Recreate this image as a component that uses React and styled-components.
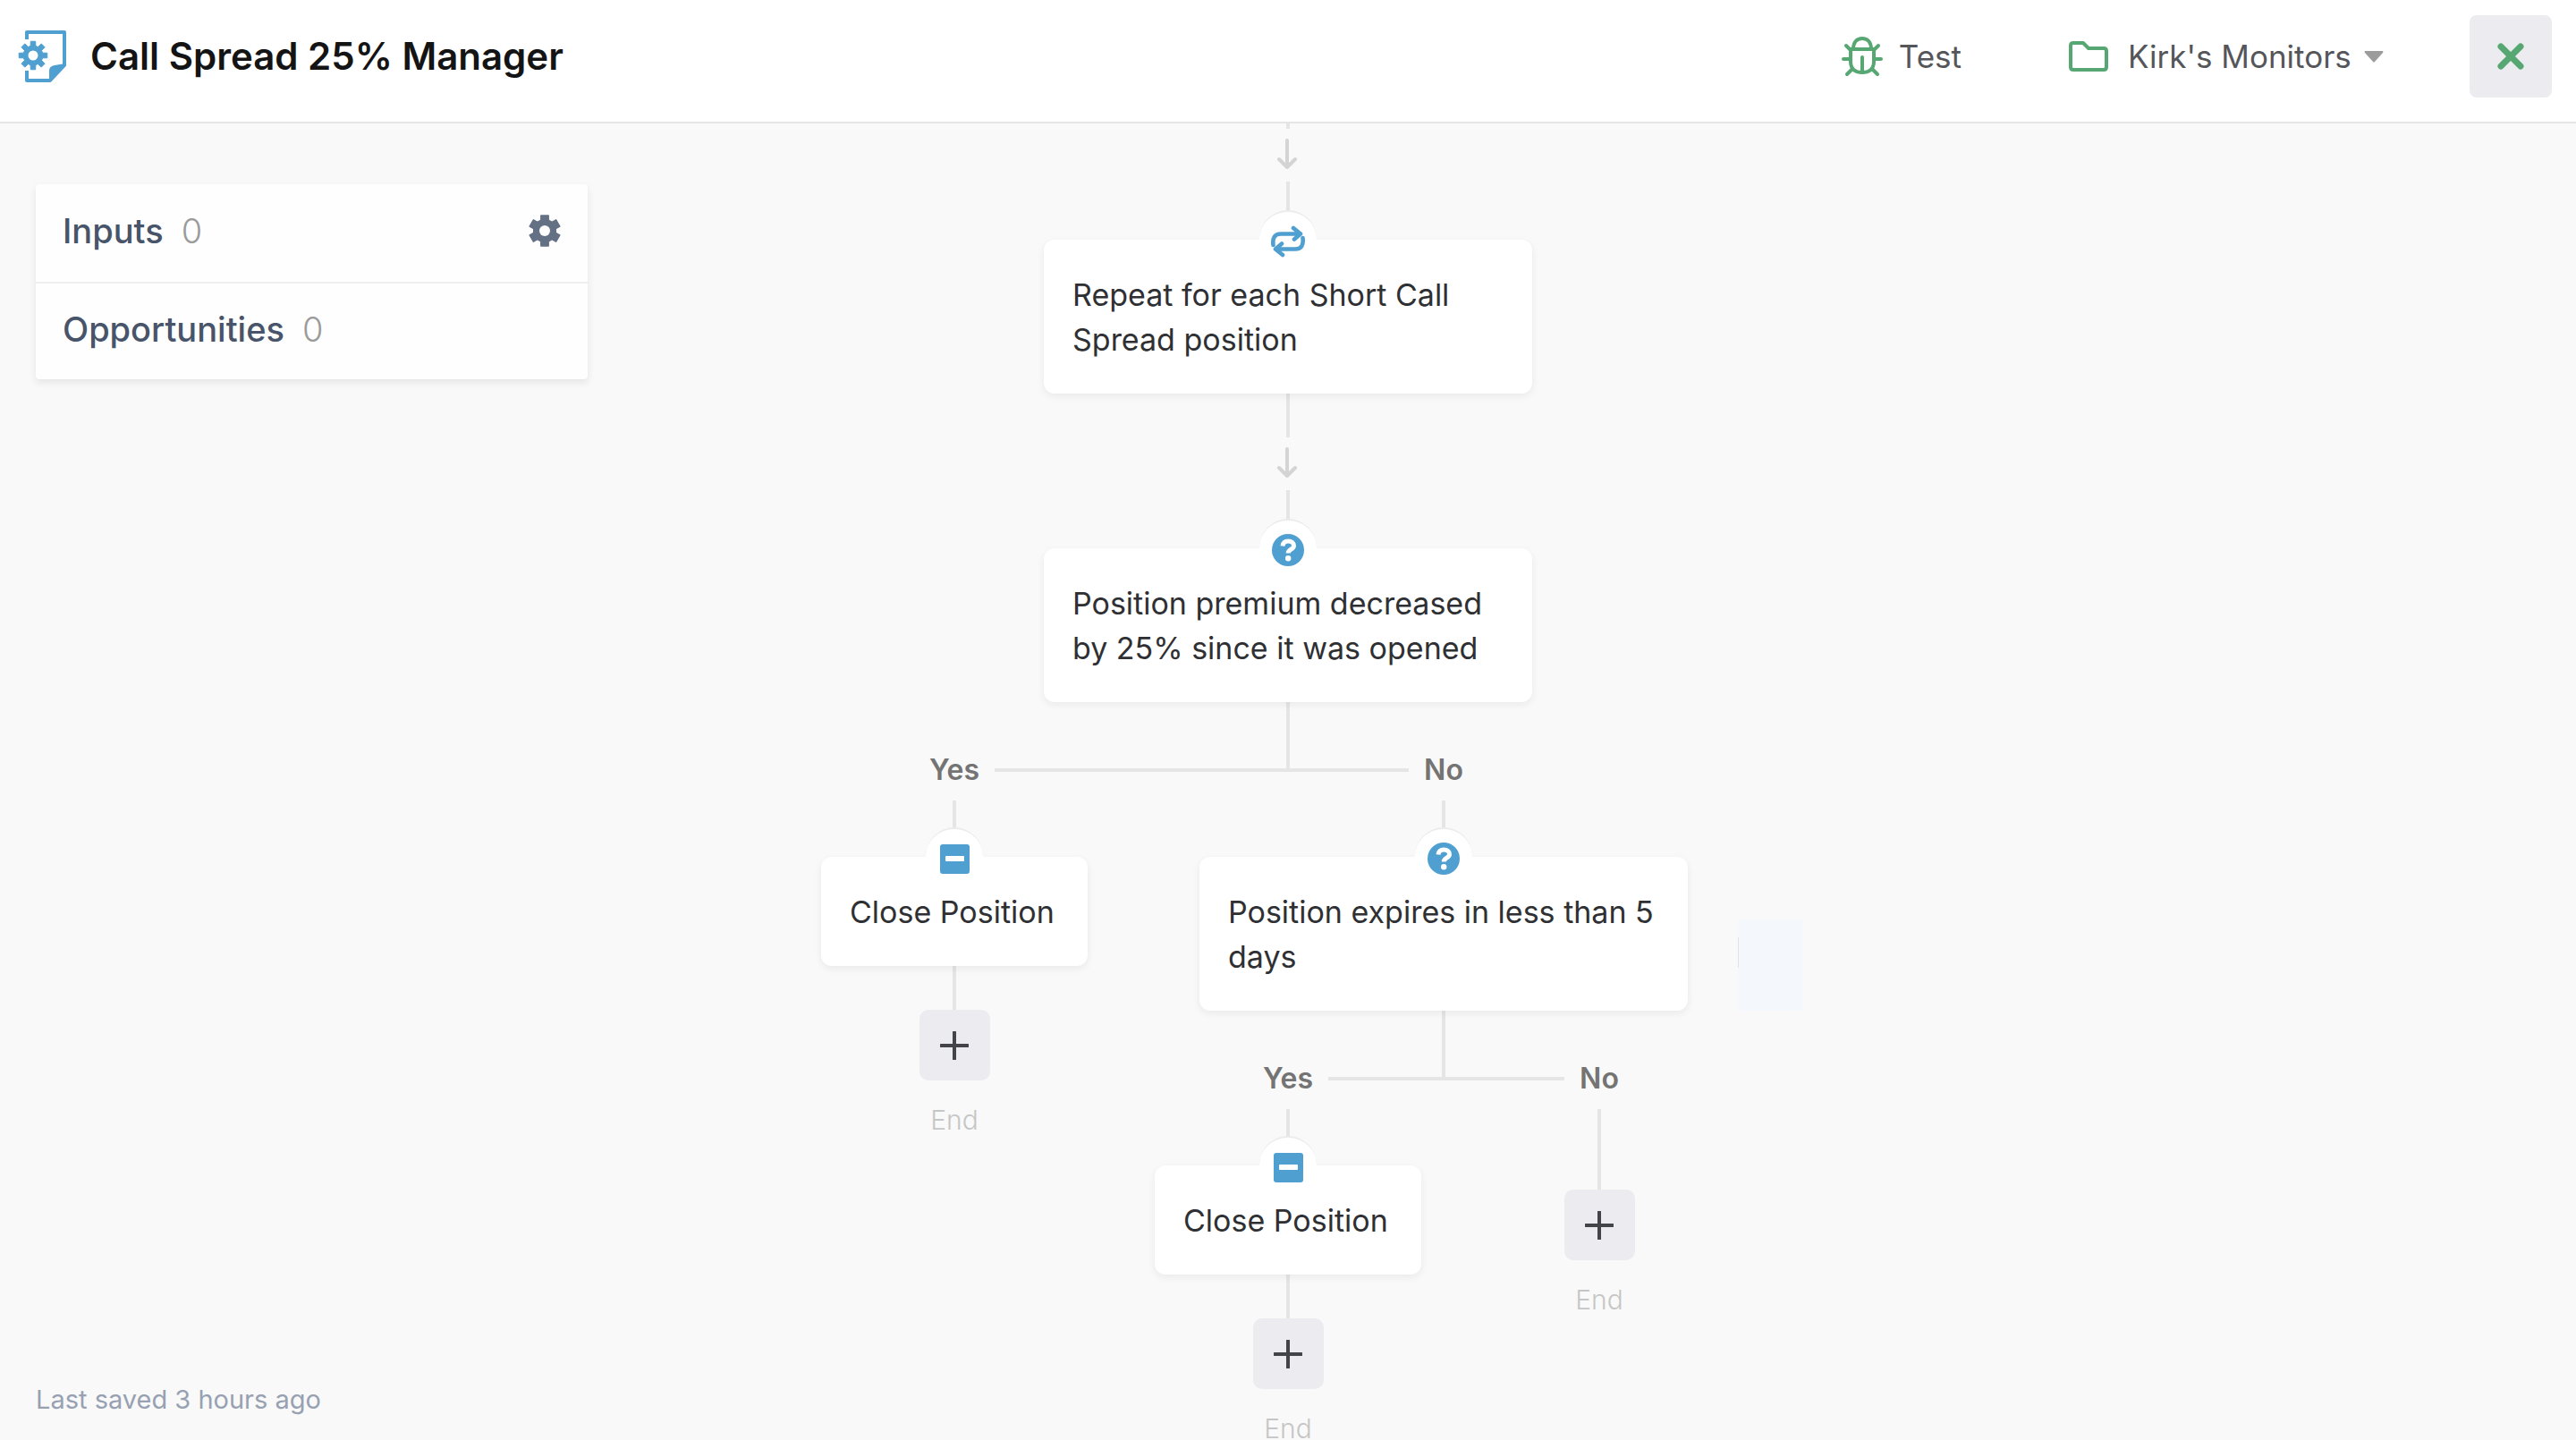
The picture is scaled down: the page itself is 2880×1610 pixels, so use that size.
import React from "react";
import styled, { createGlobalStyle } from "styled-components";

const GlobalStyle = createGlobalStyle`
  *, *::before, *::after { box-sizing: border-box; }
  body {
    margin: 0;
    background: #f9f9f9;
    color: #2f3033;
    font-family: Inter, "Liberation Sans", sans-serif;
    -webkit-font-smoothing: antialiased;
  }
  h1, h2, p { margin: 0; font: inherit; }
  button, select {
    border: 0;
    padding: 0;
    background: none;
    color: inherit;
    font: inherit;
    cursor: pointer;
  }
`;

const palette = {
  blue: "#4f9fd1",
  green: "#57a773",
  line: "#e5e5e5",
  button: "#ebebf0",
};

const Page = styled.div`
  display: grid;
  grid-template-rows: auto minmax(0, 1fr);
  height: 100vh;
`;

const Header = styled.header`
  display: flex;
  align-items: center;
  height: 138px;
  padding: 0 27px 10px 20px;
  background: #fff;
  border-bottom: 2px solid ${palette.line};
`;

const Title = styled.h1`
  flex: 1;
  margin-left: 26px;
  color: #141414;
  font-size: 42px;
  font-weight: 600;
  line-height: 48px;
`;

const ToolButton = styled.button`
  display: flex;
  align-items: center;
  gap: 18px;
  margin-right: 120px;
  color: #55565a;
  font-size: 35px;
  line-height: 44px;
`;

const FolderPicker = styled.label`
  display: flex;
  align-items: center;
  gap: 22px;
  margin-right: 96px;
  color: #55565a;
`;

const FolderSelect = styled.select`
  appearance: none;
  margin-right: -8px;
  font-size: 35px;
  line-height: 44px;
`;

const CloseButton = styled.button`
  display: grid;
  place-items: center;
  width: 92px;
  height: 92px;
  border-radius: 8px;
  background: ${palette.button};
`;

const Canvas = styled.main`
  display: grid;
  grid-template-columns: minmax(0, 1fr) auto minmax(0, 1fr);
  grid-template-rows: 100%;
  overflow: hidden;
  position: relative;
`;

const Sidebar = styled.aside`
  display: flex;
  flex-direction: column;
  justify-content: space-between;
  align-items: flex-start;
  padding: 68px 40px 25px;
`;

const Panel = styled.section`
  width: 617px;
  background: #fefefe;
  border-radius: 4px;
  box-shadow: 0 4px 8px rgba(30, 30, 60, 0.09);
`;

const PanelRow = styled.div`
  display: flex;
  align-items: center;
  gap: 20px;
  height: 109px;
  padding: 0 30px 6px;
  font-size: 38px;
  line-height: 44px;

  & + & { border-top: 2px solid #efefef; }
`;

const PanelName = styled.h2`
  color: #475469;
  font-weight: 500;
`;

const PanelCount = styled.span`
  flex: 1;
  color: #9b9b9b;
  font-weight: 300;
`;

const IconButton = styled.button`
  display: grid;
`;

const SavedNote = styled.p`
  color: #97a1b2;
  font-size: 29px;
  line-height: 40px;
`;

const Flow = styled.div`
  display: flex;
  flex-direction: column;
  align-items: center;
`;

const Line = styled.div`
  flex: none;
  width: 4px;
  height: ${(p) => p.$length}px;
  background: ${palette.line};
`;

const ArrowGap = styled.div`
  display: flex;
  padding: 11px 0 14px;
`;

const Card = styled.section`
  position: relative;
  flex: none;
  width: ${(p) => (p.$wide ? 546 : 298)}px;
  padding: 37px 32px 35px;
  border-radius: 12px;
  background: #fff;
  box-shadow: 0 3px 8px rgba(30, 30, 50, 0.07);
  font-size: 34px;
  line-height: 50px;
  white-space: ${(p) => (p.$wide ? "normal" : "nowrap")};
`;

const Badge = styled.span`
  position: absolute;
  top: -33px;
  left: calc(50% - 32px);
  display: grid;
  place-items: center;
  width: 64px;
  height: 68px;
  border-top: 2px solid #ececec;
  border-radius: 32px 32px 0 0;
  background: #fff;
`;

const Stub = styled(Line)`
  margin-bottom: -24px;
`;

const Branches = styled.div`
  display: flex;
  align-items: flex-start;
`;

const Branch = styled.div`
  display: flex;
  flex-direction: column;
  align-items: center;
  min-width: 348px;
`;

const BranchHead = styled.div`
  display: grid;
  grid-template-columns: minmax(0, 1fr) auto minmax(0, 1fr);
  align-items: center;
  gap: 17px;
  align-self: stretch;
  height: 48px;
  margin-bottom: 10px;
`;

const BranchBar = styled.div`
  grid-column: ${(p) => (p.$side === "right" ? 3 : 1)};
  grid-row: 1;
  height: 4px;
  background: ${palette.line};
`;

const BranchLabel = styled.span`
  grid-column: 2;
  grid-row: 1;
  color: #747474;
  font-size: 32px;
  font-weight: 600;
  line-height: 48px;
`;

const BranchBody = styled.div`
  display: flex;
  flex-direction: column;
  align-items: center;
  padding: 0 25px;
`;

const AddButton = styled.button`
  display: grid;
  place-items: center;
  width: 79px;
  height: 79px;
  border-radius: 10px;
  background: ${palette.button};
`;

const EndLabel = styled.span`
  margin-top: 32px;
  color: #c6c6c6;
  font-size: 30px;
  font-weight: 300;
  line-height: 24px;
`;

const DropGhost = styled.div`
  position: absolute;
  top: 890px;
  left: calc(50% + 503px);
  width: 72px;
  height: 102px;
  padding-top: 20px;
  background: #f4f8fc;

  &::before {
    content: "";
    display: block;
    width: 1px;
    height: 34px;
    background: #dfe2e6;
  }
`;

const gearPath = (teeth, outer, inner, tipHalf, rootHalf) => {
  const points = [];
  for (let i = 0; i < teeth; i += 1) {
    const mid = (i * 2 * Math.PI) / teeth - Math.PI / 2;
    [[-rootHalf, inner], [-tipHalf, outer], [tipHalf, outer], [rootHalf, inner]].forEach(([a, r]) => {
      points.push(`${(Math.cos(mid + a) * r).toFixed(2)} ${(Math.sin(mid + a) * r).toFixed(2)}`);
    });
  }
  return `M${points.join("L")}Z`;
};

const AutomationLogo = () => (
  <svg width="55" height="60" viewBox="0 0 55 60" aria-hidden="true">
    <path d="M10 11V3H52V40L36 57H10V46" fill="none" stroke={palette.blue} strokeWidth="4" strokeLinejoin="round" />
    <path d="M53 38L41 40Q35 41 35 46V58Z" fill={palette.blue} />
    <g transform="translate(17 29)">
      <path d={gearPath(8, 16, 11, 0.17, 0.26)} fill={palette.blue} stroke={palette.blue} strokeLinejoin="round" />
      <circle r="5.5" fill="#fff" />
    </g>
  </svg>
);

const BugIcon = () => (
  <svg width="46" height="46" viewBox="0 0 46 46" fill="none" stroke={palette.green} strokeWidth="4" strokeLinecap="round" aria-hidden="true">
    <path d="M10 15H36V29C36 38 30 41 23 41S10 38 10 29Z" strokeLinejoin="round" />
    <path d="M13 15C13 7 17 3 23 3S33 7 33 15" />
    <path d="M23 24V41M2 26H10M36 26H44M5 11L10 16M41 11L36 16M6 43L12 37M40 43L34 37" />
  </svg>
);

const FolderIcon = () => (
  <svg width="44" height="34" viewBox="0 0 44 34" fill="none" stroke={palette.green} strokeWidth="4" strokeLinejoin="round" aria-hidden="true">
    <path d="M2 5Q2 2 5 2H16L22 8H39Q42 8 42 11V29Q42 32 39 32H5Q2 32 2 29Z" />
  </svg>
);

const CaretIcon = () => (
  <svg width="22" height="13" viewBox="0 0 22 13" aria-hidden="true">
    <path d="M1 0H21Q22 1 21 2L12 12Q11 13 10 12L1 2Q0 1 1 0Z" fill="#9c9c9c" />
  </svg>
);

const CloseIcon = () => (
  <svg width="32" height="32" viewBox="0 0 32 32" aria-hidden="true">
    <path d="M5 5L27 27M27 5L5 27" stroke={palette.green} strokeWidth="7" strokeLinecap="round" />
  </svg>
);

const GearIcon = () => (
  <svg width="36" height="36" viewBox="-18 -18 36 36" aria-hidden="true">
    <path d={gearPath(6, 17.500, 12.500, 0.24, 0.34)} fill="#647084" stroke="#647084" strokeWidth="1.500" strokeLinejoin="round" />
    <circle r="6" fill="#fefefe" />
  </svg>
);

const ArrowDown = () => (
  <svg width="24" height="34" viewBox="0 0 24 34" fill="none" stroke="#d4d4d4" strokeWidth="4" strokeLinecap="round" strokeLinejoin="round" aria-hidden="true">
    <path d="M11 2V31M2 23L11 32L20 23" />
  </svg>
);

const RepeatIcon = () => (
  <svg width="40" height="36" viewBox="0 0 40 36" fill="none" stroke={palette.blue} strokeWidth="4.6" strokeLinecap="round" strokeLinejoin="round" aria-hidden="true">
    <path d="M3.500 22C2.500 14 5 9.500 12 9.500H34M26 3L34 9.500L27 15.500" />
    <path d="M36.500 14C37.500 22 35 26.500 28 26.500H6M14 33L6 26.500L13 20.500" />
  </svg>
);

const QuestionIcon = () => (
  <svg width="36" height="36" viewBox="0 0 36 36" aria-hidden="true">
    <circle cx="18" cy="18" r="18" fill={palette.blue} />
    <path d="M12 13.500C12.500 9.500 15 8 18.200 8C22 8 24.500 10 24.500 13.200C24.500 17.500 18.200 17 18.200 21.500" fill="none" stroke="#fff" strokeWidth="5" />
    <circle cx="18.200" cy="27.300" r="3.200" fill="#fff" />
  </svg>
);

const MinusIcon = () => (
  <svg width="33" height="33" viewBox="0 0 33 33" aria-hidden="true">
    <rect width="33" height="33" rx="3" fill={palette.blue} />
    <rect x="6" y="13" width="21" height="6" rx="1" fill="#fff" />
  </svg>
);

const PlusIcon = () => (
  <svg width="32" height="32" viewBox="0 0 32 32" aria-hidden="true">
    <path d="M16 1V31M1 16H31" stroke="#434449" strokeWidth="4" strokeLinecap="round" />
  </svg>
);

const icons = { repeat: RepeatIcon, question: QuestionIcon, minus: MinusIcon };

const Step = ({ icon, wide, children }) => {
  const Icon = icons[icon];
  return (
    <Card $wide={wide}>
      <Badge><Icon /></Badge>
      {children}
    </Card>
  );
};

const Connector = ({ lead }) => (
  <>
    <Line $length={lead} />
    <ArrowGap><ArrowDown /></ArrowGap>
    <Line $length={65} />
  </>
);

const End = ({ lead }) => (
  <>
    <Line $length={lead} />
    <AddButton type="button" aria-label="Add step"><PlusIcon /></AddButton>
    <EndLabel>End</EndLabel>
  </>
);

const Path = ({ label, side, children }) => (
  <Branch>
    <BranchHead>
      <BranchLabel>{label}</BranchLabel>
      <BranchBar $side={side} />
    </BranchHead>
    <BranchBody>{children}</BranchBody>
  </Branch>
);

const Decision = ({ yes, no }) => (
  <>
    <Stub $length={76} />
    <Branches>
      <Path label="Yes" side="right">{yes}</Path>
      <Path label="No" side="left">{no}</Path>
    </Branches>
  </>
);

const ClosePosition = () => (
  <>
    <Line $length={63} />
    <Step icon="minus">Close Position</Step>
    <End lead={49} />
  </>
);

export default function App() {
  return (
    <>
      <GlobalStyle />
      <Page>
        <Header>
          <AutomationLogo />
          <Title>Call Spread 25% Manager</Title>
          <ToolButton type="button"><BugIcon />Test</ToolButton>
          <FolderPicker>
            <FolderIcon />
            <FolderSelect aria-label="Folder" defaultValue="kirk">
              <option value="kirk">Kirk's Monitors</option>
            </FolderSelect>
            <CaretIcon />
          </FolderPicker>
          <CloseButton type="button" aria-label="Close"><CloseIcon /></CloseButton>
        </Header>
        <Canvas>
          <Sidebar>
            <Panel>
              <PanelRow>
                <PanelName>Inputs</PanelName>
                <PanelCount>0</PanelCount>
                <IconButton type="button" aria-label="Input settings"><GearIcon /></IconButton>
              </PanelRow>
              <PanelRow>
                <PanelName>Opportunities</PanelName>
                <PanelCount>0</PanelCount>
              </PanelRow>
            </Panel>
            <SavedNote>Last saved 3 hours ago</SavedNote>
          </Sidebar>
          <Flow>
            <Connector lead={6} />
            <Step icon="repeat" wide>Repeat for each Short Call Spread position</Step>
            <Connector lead={49} />
            <Step icon="question" wide>Position premium decreased by 25% since it was opened</Step>
            <Decision
              yes={<ClosePosition />}
              no={
                <>
                  <Line $length={63} />
                  <Step icon="question" wide>Position expires in less than 5 days</Step>
                  <Decision yes={<ClosePosition />} no={<End lead={90} />} />
                </>
              }
            />
          </Flow>
          <DropGhost />
        </Canvas>
      </Page>
    </>
  );
}
